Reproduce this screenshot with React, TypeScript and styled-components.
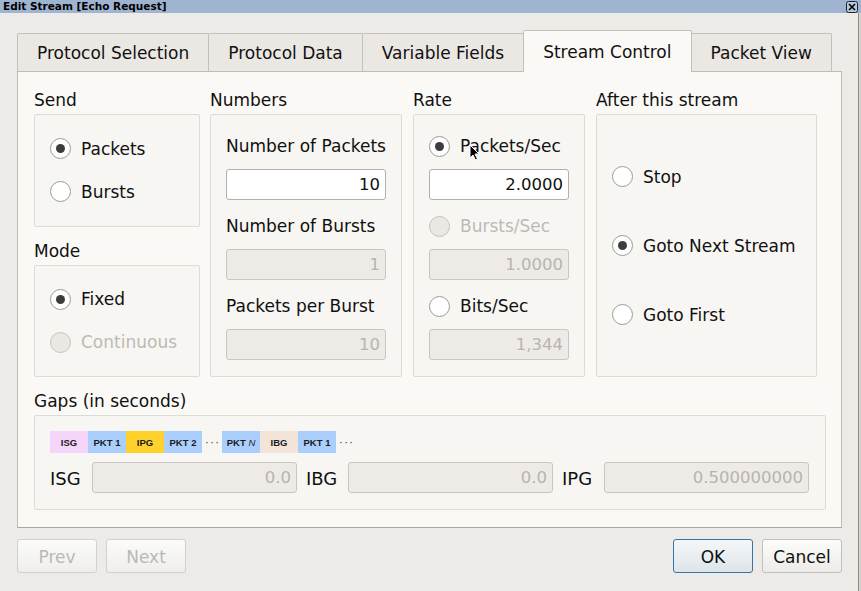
import React from "react";
import styled, { createGlobalStyle, css } from "styled-components";

const GlobalStyle = createGlobalStyle`
  html, body {
    margin: 0;
    padding: 0;
    background: #edebe7;
  }
  body {
    font-family: "DejaVu Sans", Verdana, sans-serif;
    color: #101010;
  }
  * { box-sizing: border-box; }
`;

// Fenêtre
const Window = styled.div`
  position: relative;
  width: 861px;
  height: 591px;
  display: flex;
  flex-direction: column;
  background: #edebe7;
  overflow: hidden;
`;

const TitleBar = styled.div`
  height: 13px;
  display: flex;
  align-items: center;
  justify-content: space-between;
  background: #9fb4d0;
  padding: 0 3px 0 3px;
`;

const Title = styled.span`
  font-family: "DejaVu Sans", sans-serif;
  font-weight: bold;
  font-size: 10.5px;
  line-height: 13px;
  color: #000;
`;

const CloseBox = styled.span`
  display: flex;
  width: 12px;
  height: 12px;
  margin-top: 1px;
`;

const Frame = styled.div`
  flex: 1;
  display: flex;
  border-right: 3px solid #d8d5d1;
`;

const Body = styled.div`
  flex: 1;
  display: flex;
  flex-direction: column;
  padding: 17px 16px 0 17px;
  border-right: 1px solid #8c8a88;
`;

// Onglets
const TabBar = styled.div`
  display: flex;
  align-items: flex-end;
  height: 41px;
  padding-left: 1px;
  position: relative;
  z-index: 1;
`;

const Tab = styled.div<{ $active?: boolean }>`
  height: 38px;
  padding: 0 19px;
  margin-left: -1px;
  display: flex;
  align-items: center;
  justify-content: center;
  font-size: 17px;
  color: #111;
  background: #ebe8e4;
  border: 1px solid #c4c0bb;
  border-bottom: none;
  border-radius: 2px 2px 0 0;
  white-space: nowrap;
  ${(p) =>
    p.$active &&
    css`
      height: 42px;
      margin-bottom: -1px;
      padding-bottom: 0;
      background: #fbf9f6;
      position: relative;
      z-index: 2;
    `}
`;

const Pane = styled.div`
  height: 457px;
  display: flex;
  flex-direction: column;
  background: #fbf9f6;
  border: 1px solid #c0bcb7;
  border-bottom-color: #a9a5a0;
  padding: 17px 15px 17px 16px;
`;

// colonnes fixes, comme la mise en page Qt
const TopRow = styled.div`
  display: grid;
  grid-template-columns: 166px 10px 192px 11px 172px 11px 221px;
  height: 288px;
  & > :nth-child(2) { grid-column: 3; }
  & > :nth-child(3) { grid-column: 5; }
  & > :nth-child(4) { grid-column: 7; }
`;

const Column = styled.div`
  display: flex;
  flex-direction: column;
  gap: 13px;
`;

const Group = styled.div<{ $spaced?: boolean }>`
  flex: 1;
  display: flex;
  flex-direction: column;
  margin-top: ${(p) => (p.$spaced ? "13px" : "0")};
`;

const GroupLabel = styled.div`
  font-size: 17px;
  line-height: 22px;
  height: 22px;
  margin-bottom: 3px;
  white-space: nowrap;
`;

const Box = styled.div<{ $gap?: number; $center?: boolean }>`
  flex: 1;
  display: flex;
  flex-direction: column;
  background: #f8f6f3;
  border: 1px solid #dedad5;
  border-radius: 2px;
  padding: 21px 15px 0 15px;
  ${(p) =>
    p.$center &&
    css`
      justify-content: center;
      padding-top: 0;
    `}
  gap: ${(p) => (p.$gap !== undefined ? `${p.$gap}px` : "0")};
`;

const FieldLabel = styled.div`
  font-size: 17px;
  line-height: 20px;
  height: 20px;
  margin-bottom: 13px;
  white-space: nowrap;
`;

const Field = styled.input`
  display: block;
  width: 100%;
  height: 31px;
  margin: 0 0 16px 0;
  padding: 0 5px 0 4px;
  border: 1px solid #b3afab;
  border-radius: 3px;
  background: #ffffff;
  font-family: "DejaVu Sans", sans-serif;
  font-size: 16.5px;
  color: #111;
  text-align: right;
  outline: none;
  &:disabled {
    background: #eeebe7;
    border-color: #c9c5c1;
    color: #b7b4b0;
  }
`;

const RadioRow = styled.div<{ $disabled?: boolean; $spaced?: boolean }>`
  display: flex;
  align-items: center;
  gap: 10px;
  height: 22px;
  font-size: 17px;
  white-space: nowrap;
  color: ${(p) => (p.$disabled ? "#bdbab6" : "#111")};
  ${(p) =>
    p.$spaced &&
    css`
      margin-top: -1px;
      margin-bottom: 12px;
    `}
`;

const RadioCircle = styled.span<{ $checked?: boolean; $disabled?: boolean }>`
  flex: none;
  width: 21px;
  height: 21px;
  border-radius: 50%;
  border: 1px solid ${(p) => (p.$disabled ? "#c6c2be" : "#9d9a97")};
  background: ${(p) => (p.$disabled ? "#ebe8e4" : "#ffffff")};
  display: flex;
  align-items: center;
  justify-content: center;
  &::after {
    content: "";
    display: ${(p) => (p.$checked ? "block" : "none")};
    width: 9px;
    height: 9px;
    border-radius: 50%;
    background: #3d3d3d;
  }
`;

// Schéma des intervalles
const GapsBox = styled.div`
  flex: 1;
  display: flex;
  flex-direction: column;
  background: #f8f6f3;
  border: 1px solid #dedad5;
  border-radius: 2px;
  padding: 15px 16px 0 15px;
`;

const Diagram = styled.div`
  display: flex;
  height: 22px;
  margin-bottom: 9px;
`;

const Segment = styled.span<{ $color: string }>`
  width: 38px;
  height: 22px;
  display: flex;
  align-items: center;
  justify-content: center;
  background: ${(p) => p.$color};
  font-family: "Liberation Sans", Arial, sans-serif;
  font-weight: bold;
  font-size: 9.5px;
  color: #1a1a1a;
  white-space: pre;
  i { font-weight: normal; }
`;

const Dots = styled.span`
  width: 20px;
  height: 22px;
  display: flex;
  align-items: center;
  justify-content: center;
  font-size: 10px;
  letter-spacing: 2px;
  padding-left: 2px;
  color: #333;
`;

const GapsRow = styled.div`
  display: flex;
  gap: 9px;
`;

const GapUnit = styled.div`
  display: flex;
  align-items: center;
  width: 247px;
`;

const GapLabel = styled.span`
  width: 42px;
  font-size: 18px;
  padding-top: 1px;
`;

const GapField = styled(Field)`
  width: 205px;
  margin: 0;
`;

// Boutons
const ButtonRow = styled.div`
  display: flex;
  align-items: center;
  margin-top: 11px;
  height: 34px;
  gap: 9px;
`;

const Spacer = styled.div`
  flex: 1;
`;

const Button = styled.button<{ $default?: boolean }>`
  width: 80px;
  height: 34px;
  border-radius: 3px;
  border: 1px solid #c3bfbb;
  background: linear-gradient(#fcfcfb, #ecebe9);
  font-family: "DejaVu Sans", sans-serif;
  font-size: 17px;
  color: #111;
  padding: 2px 0 0 0;
  &:disabled {
    color: #bbb8b4;
    border-color: #d3cfcb;
    background: linear-gradient(#fbfbfa, #efeeec);
  }
  ${(p) =>
    p.$default &&
    css`
      border-color: #3a74a4;
      background: linear-gradient(#f4f7f9, #dde5ea);
    `}
`;

const Cursor = styled.svg`
  position: absolute;
  left: 469px;
  top: 144px;
`;

const Radio: React.FC<{ label: string; checked?: boolean; disabled?: boolean; spaced?: boolean }> = ({
  label,
  checked,
  disabled,
  spaced,
}) => (
  <RadioRow $disabled={disabled} $spaced={spaced}>
    <RadioCircle $checked={checked} $disabled={disabled} />
    <span>{label}</span>
  </RadioRow>
);

const segments: { label: React.ReactNode; color: string }[] = [
  { label: "ISG", color: "#f6d5fb" },
  { label: "PKT 1", color: "#abcffd" },
  { label: "IPG", color: "#fdd22c" },
  { label: "PKT 2", color: "#abcffd" },
];

const segments2: { label: React.ReactNode; color: string }[] = [
  { label: <>PKT <i>N</i></>, color: "#abcffd" },
  { label: "IBG", color: "#f2e4d8" },
  { label: "PKT 1", color: "#abcffd" },
];

const tabs = ["Protocol Selection", "Protocol Data", "Variable Fields", "Stream Control", "Packet View"];

export default function App() {
  return (
    <Window>
      <GlobalStyle />
      <TitleBar>
        <Title>Edit Stream [Echo Request]</Title>
        <CloseBox>
          <svg width="12" height="12" viewBox="0 0 12 12">
            <rect x="0.5" y="0.5" width="11" height="11" rx="2" fill="#b7c7dc" stroke="#1c2430" />
            <path d="M3 3 L9 9 M9 3 L3 9" stroke="#000" strokeWidth="1.6" />
          </svg>
        </CloseBox>
      </TitleBar>
      <Frame>
        <Body>
          <TabBar>
            {tabs.map((t) => (
              <Tab key={t} $active={t === "Stream Control"}>
                {t}
              </Tab>
            ))}
          </TabBar>
          <Pane>
            <TopRow>
              <Column>
                <Group>
                  <GroupLabel>Send</GroupLabel>
                  <Box $center $gap={21}>
                    <Radio label="Packets" checked />
                    <Radio label="Bursts" />
                  </Box>
                </Group>
                <Group>
                  <GroupLabel>Mode</GroupLabel>
                  <Box $center $gap={21}>
                    <Radio label="Fixed" checked />
                    <Radio label="Continuous" disabled />
                  </Box>
                </Group>
              </Column>
              <Group>
                <GroupLabel>Numbers</GroupLabel>
                <Box>
                  <FieldLabel>Number of Packets</FieldLabel>
                  <Field readOnly value="10" />
                  <FieldLabel>Number of Bursts</FieldLabel>
                  <Field disabled value="1" />
                  <FieldLabel>Packets per Burst</FieldLabel>
                  <Field disabled value="10" />
                </Box>
              </Group>
              <Group>
                <GroupLabel>Rate</GroupLabel>
                <Box>
                  <Radio label="Packets/Sec" checked spaced />
                  <Field readOnly value="2.0000" />
                  <Radio label="Bursts/Sec" disabled spaced />
                  <Field disabled value="1.0000" />
                  <Radio label="Bits/Sec" spaced />
                  <Field disabled value="1,344" />
                </Box>
              </Group>
              <Group>
                <GroupLabel>After this stream</GroupLabel>
                <Box $center $gap={47}>
                  <Radio label="Stop" />
                  <Radio label="Goto Next Stream" checked />
                  <Radio label="Goto First" />
                </Box>
              </Group>
            </TopRow>
            <Group $spaced>
              <GroupLabel>Gaps (in seconds)</GroupLabel>
              <GapsBox>
                <Diagram>
                  {segments.map((s, i) => (
                    <Segment key={i} $color={s.color}>
                      {s.label}
                    </Segment>
                  ))}
                  <Dots>···</Dots>
                  {segments2.map((s, i) => (
                    <Segment key={i} $color={s.color}>
                      {s.label}
                    </Segment>
                  ))}
                  <Dots>···</Dots>
                </Diagram>
                <GapsRow>
                  <GapUnit>
                    <GapLabel>ISG</GapLabel>
                    <GapField disabled value="0.0" />
                  </GapUnit>
                  <GapUnit>
                    <GapLabel>IBG</GapLabel>
                    <GapField disabled value="0.0" />
                  </GapUnit>
                  <GapUnit>
                    <GapLabel>IPG</GapLabel>
                    <GapField disabled value="0.500000000" />
                  </GapUnit>
                </GapsRow>
              </GapsBox>
            </Group>
          </Pane>
          <ButtonRow>
            <Button disabled>Prev</Button>
            <Button disabled>Next</Button>
            <Spacer />
            <Button $default>OK</Button>
            <Button>Cancel</Button>
          </ButtonRow>
        </Body>
      </Frame>
      <Cursor width="11" height="17" viewBox="0 0 11 17">
        <path d="M1 1 L1 14 L4 11 L6.5 16 L8.5 15 L6 10 L10 10 Z" fill="#000" stroke="#fff" strokeWidth="1" />
      </Cursor>
    </Window>
  );
}
